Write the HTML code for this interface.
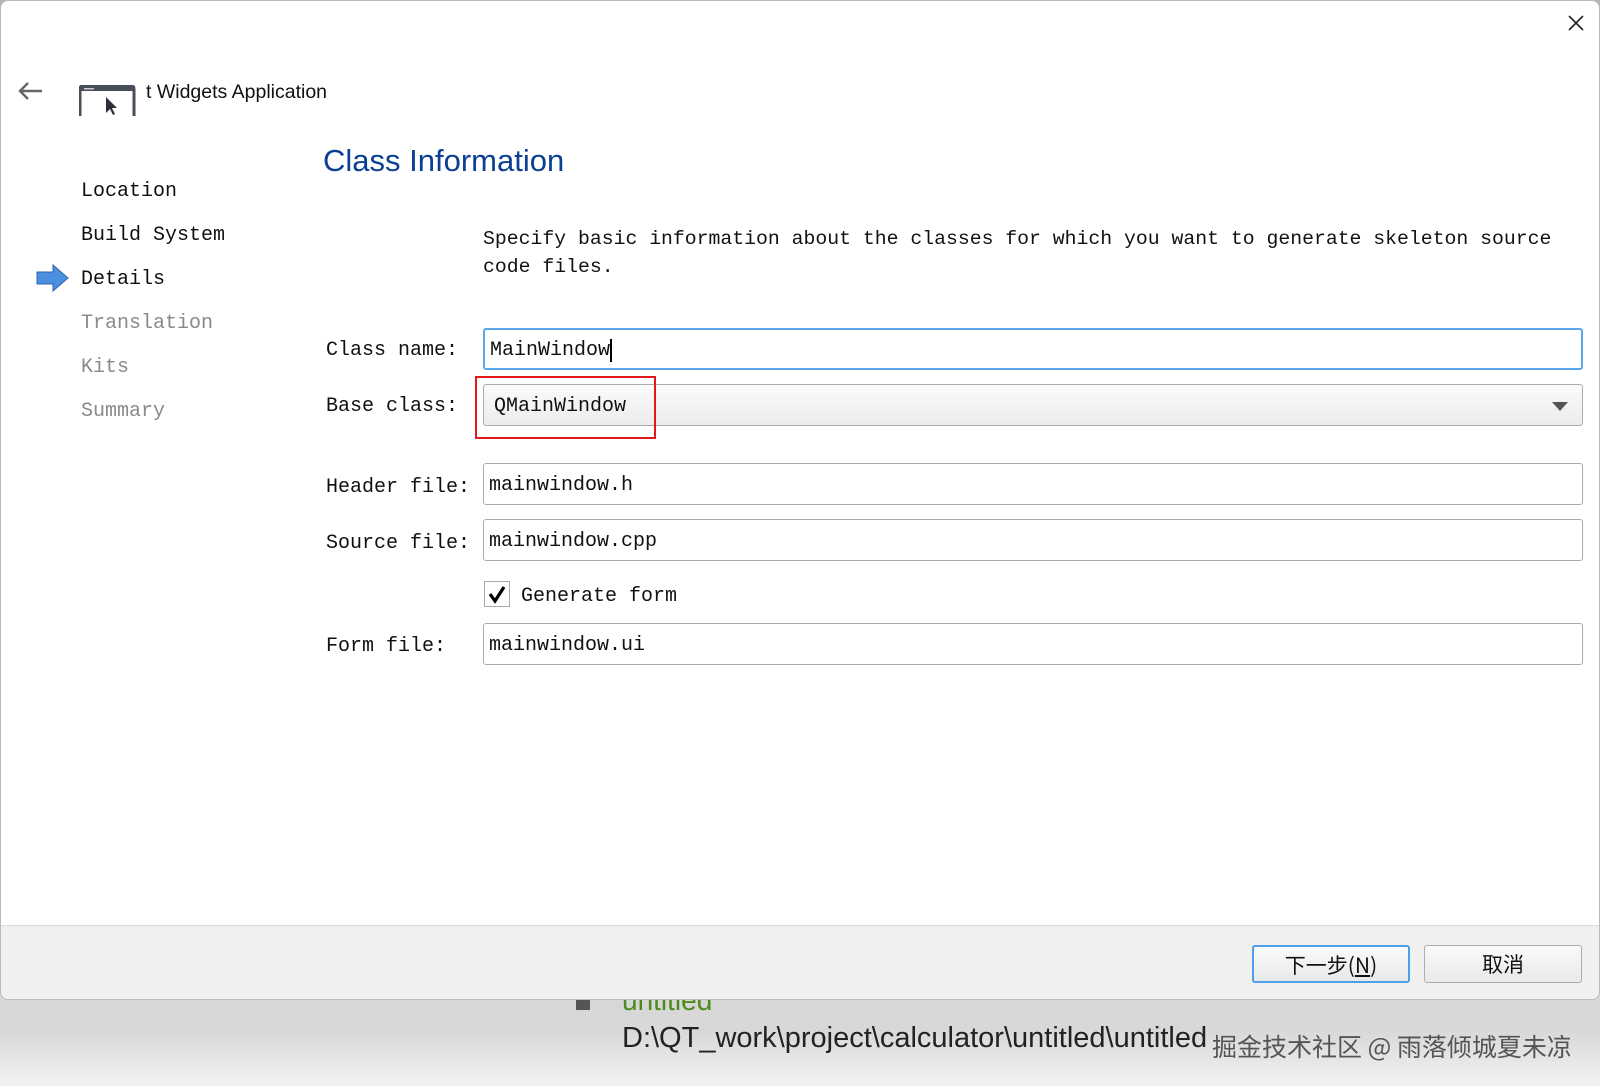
<!DOCTYPE html>
<html><head><meta charset="utf-8"><style>
*{margin:0;padding:0;box-sizing:border-box}
body{width:1600px;height:1086px;overflow:hidden;position:relative;background:linear-gradient(#b4b4b4 0px,#d8d8d8 1030px,#f2f2f2 1086px);font-family:"Liberation Mono","Noto Sans CJK SC",monospace}
.dlg{position:absolute;left:0;top:0;width:1600px;height:1000px;background:#fff;border:1px solid #bbb;border-radius:8px;overflow:hidden}
.abs{position:absolute}
.mono{font-family:"Liberation Mono","Noto Sans CJK SC",monospace;font-size:20px;color:#111;white-space:nowrap}
.side{left:80px}
.gray{color:#8a8a8a}
.inp{position:absolute;left:482px;width:1100px;height:42px;border:1px solid #acacac;border-radius:3px;background:#fff;padding-left:5px;line-height:44px}
.lbl{left:325px}
.foot{position:absolute;left:0;top:924px;width:1600px;height:76px;background:#f0f0f0;border-top:1px solid #dcdcdc}
.btn{position:absolute;top:19px;height:38px;width:158px;border:1px solid #adadad;border-radius:3px;background:linear-gradient(#fafafa,#e9e9e9);font-family:"Noto Sans CJK SC",sans-serif;font-size:21px;text-align:center;line-height:36px;color:#111}
</style></head><body>
<div class="abs" style="left:560px;top:985px;font-family:'Liberation Sans',sans-serif">
<div class="abs" style="left:16px;top:12px;width:14px;height:13px;background:#555"></div>
<div class="abs" style="left:62px;top:0px;color:#4d8a1c;font-size:28px">untitled</div>
<div class="abs" style="left:62px;top:37px;color:#222;font-size:29px;white-space:nowrap">D:\QT_work\project\calculator\untitled\untitled</div>
</div>
<div class="abs" style="left:1212px;top:1028px;font-family:'Noto Sans CJK SC',sans-serif;font-size:25px;color:#555;white-space:nowrap">掘金技术社区 @ 雨落倾城夏未凉</div>
<div class="dlg">
<svg class="abs" style="left:1566px;top:13px" width="18" height="18"><path d="M2 2L16 16M16 2L2 16" stroke="#222" stroke-width="1.6"/></svg>
<svg class="abs" style="left:15px;top:78px" width="28" height="24"><path d="M26 12H4M12 4L4 12L12 20" stroke="#666" stroke-width="2.4" fill="none"/></svg>
<svg class="abs" style="left:78px;top:84px" width="58" height="31"><path d="M1 31V4Q1 1 4 1H52Q55 1 55 4V31" fill="none" stroke="#4a4d5a" stroke-width="3"/><rect x="1" y="1" width="54" height="5" fill="#4a4d5a"/><rect x="5" y="3" width="10" height="1.5" fill="#ccc"/><path d="M27 12V28L31 24L34 30L36 29L33 23H38Z" fill="#2c2f3a"/></svg>
<div class="abs" style="left:145px;top:80px;font-family:'Liberation Sans',sans-serif;font-size:19.5px;color:#111">t Widgets Application</div>
<div class="abs" style="left:322px;top:142px;font-family:'Liberation Sans',sans-serif;font-size:31px;color:#0a3f93">Class Information</div>
<div class="abs mono side" style="top:179px">Location</div>
<div class="abs mono side" style="top:223px">Build System</div>
<svg class="abs" style="left:35px;top:263px" width="34" height="28"><path d="M1 8H17V1L32 14L17 27V20H1Z" fill="#4a8fe0" stroke="#2e64b0" stroke-width="1"/></svg>
<div class="abs mono side" style="top:267px">Details</div>
<div class="abs mono side gray" style="top:311px">Translation</div>
<div class="abs mono side gray" style="top:355px">Kits</div>
<div class="abs mono side gray" style="top:399px">Summary</div>
<div class="abs mono" style="left:482px;top:224px;font-size:19.8px;line-height:28px">Specify basic information about the classes for which you want to generate skeleton source<br>code files.</div>
<div class="abs mono lbl" style="top:338px">Class name:</div>
<div class="abs mono lbl" style="top:394px">Base class:</div>
<div class="abs mono lbl" style="top:475px">Header file:</div>
<div class="abs mono lbl" style="top:531px">Source file:</div>
<div class="abs mono lbl" style="top:634px">Form file:</div>
<div class="inp mono" style="top:327px;border:2px solid #5aa7ea;line-height:42px">MainWindow<span style="border-left:2px solid #000;margin-left:0"></span></div>
<div class="inp mono" style="top:383px;background:linear-gradient(#fbfbfb,#ececec);padding-left:10px">QMainWindow<svg class="abs" style="right:14px;top:17px" width="16" height="9"><path d="M0 0H16L8 9Z" fill="#555"/></svg></div>
<div class="abs" style="left:474px;top:375px;width:181px;height:63px;border:2px solid #e01a1a"></div>
<div class="inp mono" style="top:462px">mainwindow.h</div>
<div class="inp mono" style="top:518px">mainwindow.cpp</div>
<div class="abs" style="left:483px;top:580px;width:26px;height:26px;border:1px solid #aaa;background:#fff"><svg width="24" height="24"><path d="M5 12L10 19L19 5" stroke="#000" stroke-width="3.2" fill="none"/></svg></div>
<div class="abs mono" style="left:520px;top:584px">Generate form</div>
<div class="inp mono" style="top:622px">mainwindow.ui</div>
<div class="foot">
<div class="btn" style="left:1251px;border:2px solid #4ba0e8">下一步(<u>N</u>)</div>
<div class="btn" style="left:1423px">取消</div>
</div>
</div>
</body></html>
